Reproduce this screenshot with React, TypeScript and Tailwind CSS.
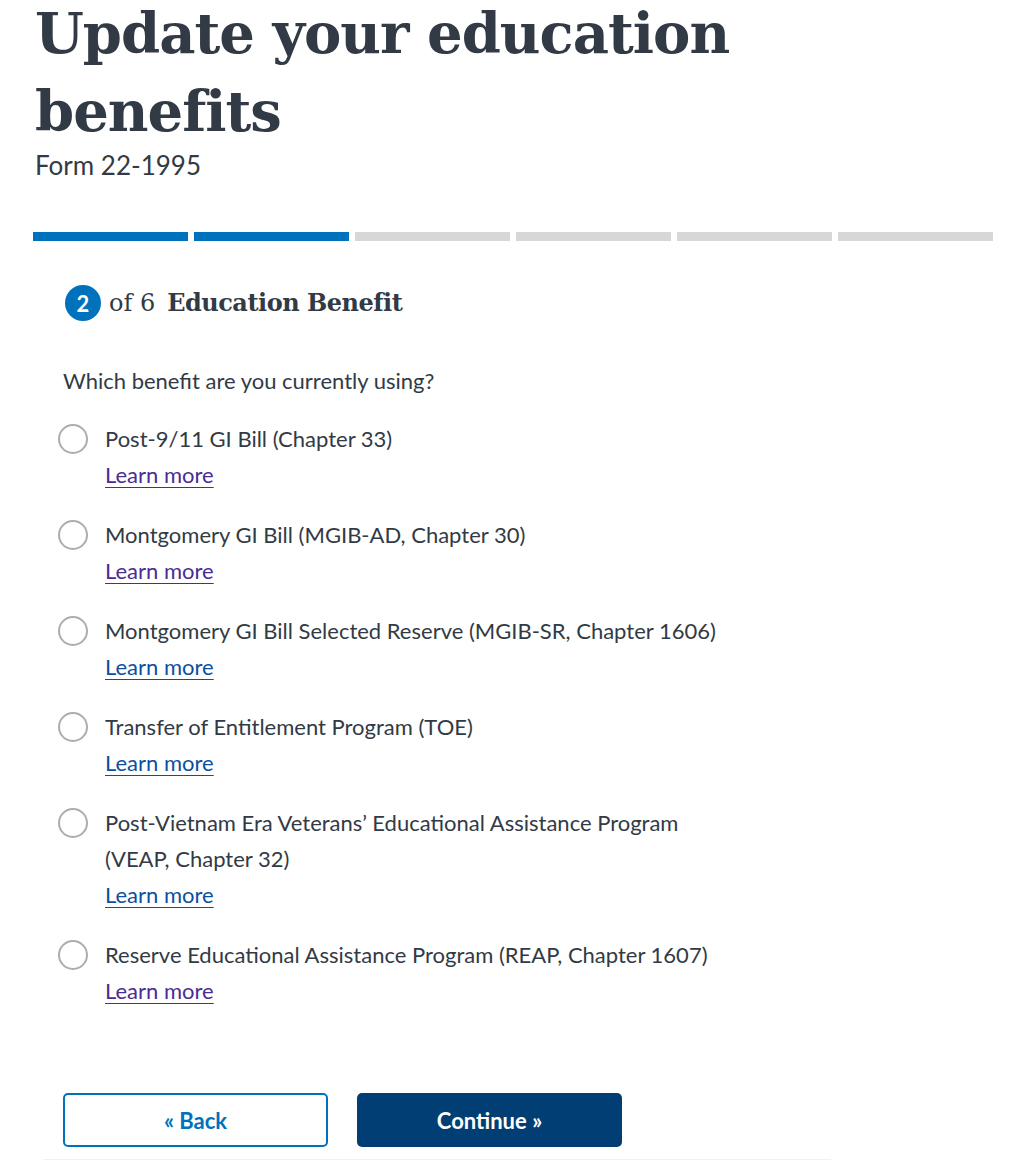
const benefits = [
  { label: "Post-9/11 GI Bill (Chapter 33)", visited: true },
  { label: "Montgomery GI Bill (MGIB-AD, Chapter 30)", visited: true },
  { label: "Montgomery GI Bill Selected Reserve (MGIB-SR, Chapter 1606)", visited: false },
  { label: "Transfer of Entitlement Program (TOE)", visited: false },
  {
    label: "Post-Vietnam Era Veterans’ Educational Assistance Program (VEAP, Chapter 32)",
    visited: false,
  },
  { label: "Reserve Educational Assistance Program (REAP, Chapter 1607)", visited: true },
];

const serif = "font-['DejaVu_Serif',serif]";
const sans = "font-['Lato',sans-serif]";

function BenefitOption({ label, visited }: { label: string; visited: boolean }) {
  return (
    <div className="flex items-start">
      <span className="mt-[3px] h-[30px] w-[30px] shrink-0 rounded-full border-2 border-[#a9aeb1] bg-white" />
      <div className="ml-[17px] w-[620px]">
        <p className="text-[22px] leading-[36px]">{label}</p>
        <a
          href="#"
          className={`block w-fit text-[22px] leading-[36px] underline decoration-1 underline-offset-4 ${
            visited ? "text-[#4c2c92]" : "text-[#0d4f9e]"
          }`}
        >
          Learn more
        </a>
      </div>
    </div>
  );
}

export default function App() {
  return (
    <div className={`min-h-[1160px] bg-white text-[#323a45] ${sans}`}>
      <div className="w-[993px] pl-[33px]">
        <h1 className={`${serif} flex flex-col gap-[18px] pl-[2px] pt-[3px] text-[56px] font-bold leading-[60px] tracking-[-1px]`}>
          <span>Update your education</span>
          <span>benefits</span>
        </h1>
        <p className="mt-[6px] pl-[2px] text-[26px] leading-[36px]">Form 22-1995</p>

        <div className="mt-[49px] flex gap-[6px]">
          {[0, 1, 2, 3, 4, 5].map((i) => (
            <div key={i} className={`h-[9px] flex-1 ${i < 2 ? "bg-[#0071bb]" : "bg-[#d6d7d9]"}`} />
          ))}
        </div>

        <div className="mt-[44px] flex items-center pl-[32px]">
          <span className="flex h-[36px] w-[36px] items-center justify-center rounded-full bg-[#0071bb] text-[22px] font-bold text-white">
            2
          </span>
          <span className={`${serif} ml-[8px] text-[24px]`}>of 6</span>
          <h2 className={`${serif} ml-[12px] text-[24px] font-bold tracking-[-0.5px]`}>Education Benefit</h2>
        </div>

        <div className="pl-[25px]">
          <p className="mt-[42px] pl-[5px] text-[22px] leading-[36px]">Which benefit are you currently using?</p>
          <div className="mt-[22px] flex flex-col gap-[24px]">
            {benefits.map((b) => (
              <BenefitOption key={b.label} {...b} />
            ))}
          </div>

          <div className="mt-[84px] flex gap-[29px] pl-[5px]">
            <button className="h-[54px] w-[265px] rounded-[5px] border-2 border-[#0071bb] bg-white text-[22px] font-bold text-[#0071bb]">
              « Back
            </button>
            <button className="h-[54px] w-[265px] rounded-[5px] bg-[#003e73] text-[22px] font-bold text-white">
              Continue »
            </button>
          </div>
        </div>
        <div className="ml-[10px] mt-[12px] h-px w-[788px] bg-[#f1f1f1]" />
      </div>
    </div>
  );
}
